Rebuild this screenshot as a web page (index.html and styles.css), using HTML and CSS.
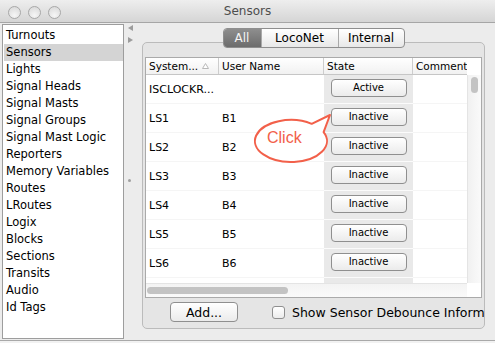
FILE: index.html
```html
<!DOCTYPE html>
<html>
<head>
<meta charset="utf-8">
<meta name="viewport" content="width=device-width, initial-scale=1">
<link rel="stylesheet" href="styles.css">
</head>
<body>

<div class="titlebar">
  <div class="lights">
    <span class="light"></span>
    <span class="light"></span>
    <span class="light"></span>
  </div>
  <div class="title">Sensors</div>
  <div></div>
</div>

<div class="main">
  <div class="navlist">
    <div class="navitem">Turnouts</div>
    <div class="navitem selected">Sensors</div>
    <div class="navitem">Lights</div>
    <div class="navitem">Signal Heads</div>
    <div class="navitem">Signal Masts</div>
    <div class="navitem">Signal Groups</div>
    <div class="navitem">Signal Mast Logic</div>
    <div class="navitem">Reporters</div>
    <div class="navitem">Memory Variables</div>
    <div class="navitem">Routes</div>
    <div class="navitem">LRoutes</div>
    <div class="navitem">Logix</div>
    <div class="navitem">Blocks</div>
    <div class="navitem">Sections</div>
    <div class="navitem">Transits</div>
    <div class="navitem">Audio</div>
    <div class="navitem">Id Tags</div>
  </div>

  <div class="splitter">
    <svg class="arrow" width="5" height="6"><polygon points="5,0 5,6 0,3" fill="#9c9c9c"/></svg>
    <svg class="arrow" width="5" height="6"><polygon points="0,0 0,6 5,3" fill="#9c9c9c"/></svg>
    <span class="grip"></span>
  </div>

  <div class="content">
    <div class="tabs">
      <div class="tabgroup">
        <span class="tab tab-all active">All</span>
        <span class="tab tab-loconet">LocoNet</span>
        <span class="tab tab-internal">Internal</span>
      </div>
    </div>

    <div class="panel">
      <div class="table">
        <div class="table-main">
          <div class="thead">
            <div class="th">System...<svg class="sort" width="7" height="6"><polygon points="0.5,5.5 6.5,5.5 3.5,0.5" fill="#fff" stroke="#b8b8b8"/></svg></div>
            <div class="th">User Name</div>
            <div class="th">State</div>
            <div class="th last">Comment</div>
          </div>
          <div class="tbody">
            <div class="row">
              <div class="td">ISCLOCKR...</div>
              <div class="td"></div>
              <div class="td state"><span class="btn small">Active</span></div>
              <div class="td"></div>
            </div>
            <div class="row">
              <div class="td">LS1</div>
              <div class="td">B1</div>
              <div class="td state"><span class="btn small">Inactive</span></div>
              <div class="td"></div>
            </div>
            <div class="row">
              <div class="td">LS2</div>
              <div class="td">B2</div>
              <div class="td state"><span class="btn small">Inactive</span></div>
              <div class="td"></div>
            </div>
            <div class="row">
              <div class="td">LS3</div>
              <div class="td">B3</div>
              <div class="td state"><span class="btn small">Inactive</span></div>
              <div class="td"></div>
            </div>
            <div class="row">
              <div class="td">LS4</div>
              <div class="td">B4</div>
              <div class="td state"><span class="btn small">Inactive</span></div>
              <div class="td"></div>
            </div>
            <div class="row">
              <div class="td">LS5</div>
              <div class="td">B5</div>
              <div class="td state"><span class="btn small">Inactive</span></div>
              <div class="td"></div>
            </div>
            <div class="row">
              <div class="td">LS6</div>
              <div class="td">B6</div>
              <div class="td state"><span class="btn small">Inactive</span></div>
              <div class="td"></div>
            </div>
            <div class="row">
              <div class="td"></div>
              <div class="td"></div>
              <div class="td state"></div>
              <div class="td"></div>
            </div>
          </div>
          <div class="hscroll"><span class="hthumb"></span></div>
        </div>
        <div class="vscroll">
          <div class="vscroll-head"></div>
          <div class="vscroll-track"><span class="vthumb"></span></div>
          <div class="corner"></div>
        </div>
      </div>

      <div class="actions">
        <span class="btn add">Add...</span>
        <span class="checkbox"></span>
        <span class="check-label">Show Sensor Debounce Inform</span>
      </div>
    </div>
  </div>
</div>
<div class="bottom"></div>

<!-- annotation balloon drawn over the table -->
<svg class="callout" width="495" height="343">
  <path d="M 323.6 132.1 A 36 21 0 1 1 311.7 123.8 L 330 115 Z" fill="#fff" stroke="#f2604a" stroke-width="2" stroke-linejoin="round"/>
  <text x="267" y="143" class="callout-text">Click</text>
</svg>

</body>
</html>
```

FILE: styles.css
```css
html, body {
  margin: 0;
  padding: 0;
}

body {
  width: 495px;
  height: 343px;
  overflow: hidden;
  position: relative;
  background: #ececec;
  font-family: "DejaVu Sans", "Liberation Sans", sans-serif;
  color: #000;
}

/* window title */
.titlebar {
  height: 22px;
  border-bottom: 1px solid #a6a6a6;
  background: linear-gradient(#eeeeee, #d5d5d5);
  display: grid;
  grid-template-columns: 1fr auto 1fr;
  align-items: center;
}

.lights {
  display: flex;
  gap: 7px;
  padding-left: 8px;
  padding-top: 2px;
}

.light {
  width: 11px;
  height: 11px;
  border-radius: 50%;
  border: 1px solid #a8a8a8;
  background: radial-gradient(circle at 50% 75%, #f6f6f6, #d6d6d6);
}

.title {
  font-size: 12px;
  color: #4d4d4d;
}

.main {
  display: flex;
  height: 317px;
}

/* left list */
.navlist {
  margin: 1px 0 0 2px;
  width: 120px;
  height: 311px;
  padding-top: 2px;
  border: 1px solid #9d9d9d;
  background: #fff;
}

.navitem {
  height: 17px;
  line-height: 17px;
  margin-left: 1px;
  padding-left: 2px;
  font-size: 11.5px;
  white-space: nowrap;
}

.navitem.selected {
  background: #d4d4d4;
}

.splitter {
  width: 13px;
  padding-left: 4px;
  display: flex;
  flex-direction: column;
}

.arrow {
  margin-top: 2px;
}

.arrow + .arrow {
  margin-top: 6px;
}

.grip {
  width: 3px;
  height: 3px;
  border-radius: 50%;
  background: #a0a0a0;
  margin-top: 136px;
}

/* right side */
.content {
  width: 354px;
}

.tabs {
  width: 343px;
  margin: 5px 0 -6px 1px;
  display: flex;
  justify-content: center;
  position: relative;
  z-index: 1;
}

.tabgroup {
  display: flex;
  height: 18px;
  border: 1px solid #8e8e8e;
  border-radius: 4px;
  overflow: hidden;
  background: linear-gradient(#ffffff, #e8e8e8);
}

.tab {
  font-size: 12px;
  line-height: 18px;
  text-align: center;
  border-left: 1px solid #a9a9a9;
}

.tab-all {
  width: 37px;
  border-left: none;
}

.tab-loconet {
  width: 76px;
}

.tab-internal {
  width: 65px;
}

.tab.active {
  background: linear-gradient(#8e8e8e, #6c6c6c);
  color: #f4f4f4;
}

.panel {
  margin-left: 1px;
  width: 339px;
  height: 271px;
  padding: 14px 0 0 2px;
  border: 1px solid #bbbbbb;
  border-radius: 5px;
  background: #e5e5e5;
  overflow: hidden;
}

.table {
  display: flex;
  width: 335px;
  border: 1px solid #aaaaaa;
  background: #fff;
}

.table-main {
  width: 321px;
}

.thead,
.row {
  display: grid;
  grid-template-columns: 73px 105px 89px 54px;
}

.thead {
  height: 16px;
  border-bottom: 1px solid #c6c6c6;
  background: linear-gradient(#ffffff, #f1f1f1);
}

.th {
  font-size: 10.5px;
  line-height: 16px;
  padding-left: 3px;
  border-right: 1px solid #cdcdcd;
  white-space: nowrap;
  overflow: hidden;
  display: flex;
  align-items: center;
}

.th.last {
  border-right: none;
}

.sort {
  margin-left: 4px;
}

.tbody {
  height: 208px;
  overflow: hidden;
}

.row {
  height: 29px;
}

.td {
  box-sizing: border-box;
  height: 29px;
  padding-left: 3px;
  border-bottom: 1px solid #f5f5f5;
  font-size: 11px;
  white-space: nowrap;
  overflow: hidden;
  display: flex;
  align-items: center;
}

.td.state {
  padding: 0 0 3px 0;
  justify-content: center;
  background: #e9e9e9;
  border-bottom-color: #fbfbfb;
}

.btn {
  flex: none;
  display: flex;
  align-items: center;
  justify-content: center;
  box-sizing: border-box;
  border: 1px solid #8f8f8f;
  border-radius: 4px;
  background: linear-gradient(#ffffff, #ebebeb);
}

.btn.small {
  width: 76px;
  height: 18px;
  font-size: 10px;
}

.hscroll {
  height: 14px;
  box-sizing: border-box;
  padding: 3px 0 0 1px;
  border-top: 1px solid #e4e4e4;
  background: linear-gradient(#f3f3f3, #fafafa);
}

.hthumb {
  display: block;
  width: 141px;
  height: 7px;
  border-radius: 4px;
  background: #c3c3c3;
}

.vscroll {
  width: 14px;
  display: flex;
  flex-direction: column;
}

.vscroll-head {
  height: 17px;
}

.vscroll-track {
  height: 208px;
  box-sizing: border-box;
  padding: 2px 0 0 3px;
  border-left: 1px solid #e4e4e4;
  background: linear-gradient(to right, #f1f1f1, #fafafa);
}

.vthumb {
  display: block;
  width: 7px;
  height: 16px;
  border-radius: 4px;
  background: #c3c3c3;
}

.corner {
  height: 14px;
}

/* bottom row of the panel */
.actions {
  height: 30px;
  padding: 0 0 2px 25px;
  box-sizing: border-box;
  display: flex;
  align-items: center;
  white-space: nowrap;
}

.btn.add {
  width: 68px;
  height: 20px;
  font-size: 12.5px;
}

.checkbox {
  flex: none;
  width: 13px;
  height: 13px;
  box-sizing: border-box;
  margin-left: 34px;
  border: 1px solid #8f8f8f;
  border-radius: 3px;
  background: linear-gradient(#ffffff, #ececec);
}

.check-label {
  flex: none;
  margin-left: 7px;
  font-size: 12.5px;
}

.bottom {
  height: 2px;
  border-top: 1px solid #a9a9a9;
  background: #f2f2f2;
}

.callout {
  position: absolute;
  left: 0;
  top: 0;
  pointer-events: none;
}

.callout-text {
  font-family: "Liberation Sans", Arial, sans-serif;
  font-size: 16px;
  fill: #f2604a;
}
```
